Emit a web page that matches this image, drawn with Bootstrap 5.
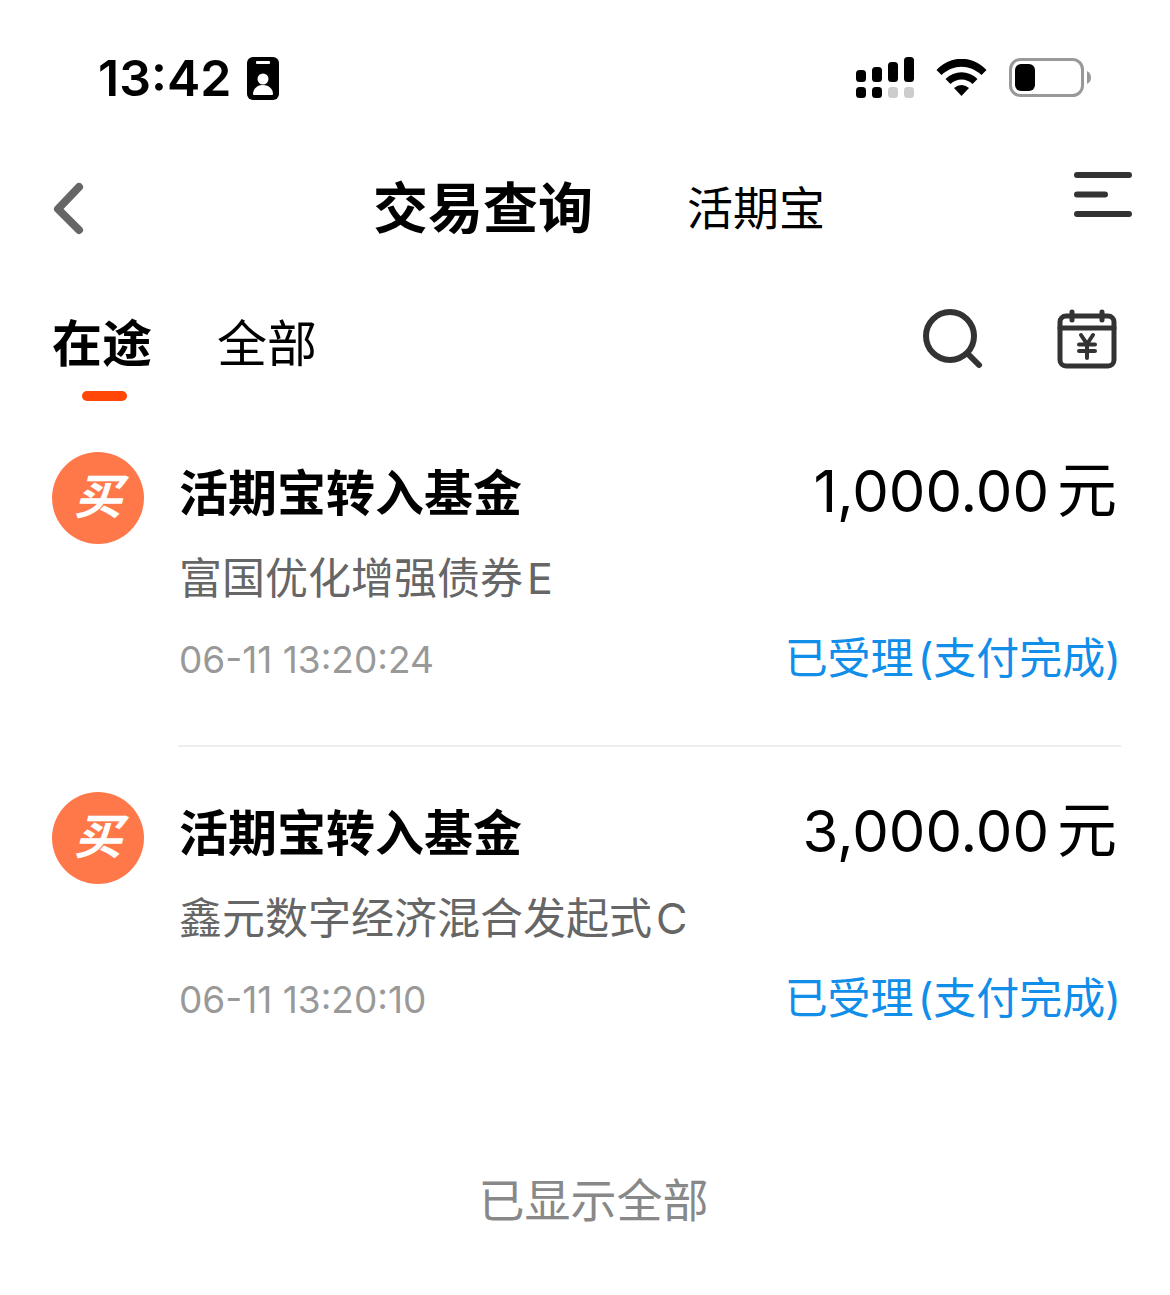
<!DOCTYPE html>
<html lang="zh-CN">
<head>
<meta charset="utf-8">
<meta name="viewport" content="width=device-width, initial-scale=1">
<title>交易查询</title>
<link href="https://cdn.jsdelivr.net/npm/bootstrap@5.3.0/dist/css/bootstrap.min.css" rel="stylesheet">
<style>
  body { font-family: Inter, "Noto Sans CJK SC", sans-serif; color: #000; background: #fff; }
  svg { display: block; flex: none; }
  a, button { color: inherit; text-decoration: none; }
  .status-bar { height: 156px; padding: 0 79px 0 98px; }
  .status-icons { gap: 22px; }
  .clock { font-size: 50px; line-height: 60px; font-weight: 600; }
  .top-bar { height: 104px; padding: 0 38px 0 52px; }
  .back-btn { width: 72px; }
  .menu-btn { padding-bottom: 26px; }
  .page-title { font-size: 55px; line-height: 80px; font-weight: 700; }
  .page-alt { font-size: 46px; line-height: 80px; }
  .title-gap { gap: 94px; }
  .tab-bar { padding: 44px 52px 0; }
  .tab-gap { gap: 65px; }
  .tab-link { font-size: 50px; line-height: 80px; padding-bottom: 17px; }
  .tab-link.active { font-weight: 700; }
  .tab-link.active::after { content: ""; position: absolute; left: 50%; bottom: 0; width: 45px; height: 10px; margin-left: -20px; border-radius: 5px; background: #ff4708; }
  .tool-gap { gap: 72px; padding-top: 4px; }
  .deal-list { padding: 6px 49px 0 52px; }
  .deal { gap: 34px; }
  .deal-badge { width: 92px; height: 92px; margin-top: 45px; border-radius: 50%; background: #ff784a; color: #fff; font-size: 48px; line-height: 90px; font-weight: 700; font-style: italic; text-align: center; flex: none; }
  .deal-body { height: 340px; padding: 37px 4px 0 1px; border-bottom: 2px solid #eee; }
  .deal:last-child .deal-body { border: 0; }
  .deal-name { font-size: 49px; line-height: 100px; font-weight: 700; }
  .deal-sum { font-size: 60px; line-height: 92px; }
  .deal-num { font-size: 58px; }
  .unit-gap { margin-left: 8px; }
  .cjk-gap { margin-left: 4px; }
  .deal-fund { font-size: 43px; line-height: 68px; color: #666; }
  .deal-time { font-size: 37px; line-height: 96px; color: #999; }
  .deal-state { font-size: 43px; line-height: 92px; color: #108ee9; margin-right: -4px; }
  .list-end { font-size: 46px; line-height: 80px; color: #888; padding: 73px 0 56px 17px; }
</style>
</head>
<body>
<div class="status-bar d-flex align-items-center justify-content-between">
  <div class="d-flex align-items-center gap-3">
    <span class="clock">13:42</span>
    <svg width="32" height="44" viewBox="0 0 32 44"><rect width="32" height="43" y="1" rx="6"/><rect x="9" y="5" width="14" height="3" rx="1" fill="#fff"/><circle cx="16" cy="23" r="5.500" fill="#fff"/><path d="M6 38c0-5 4-9 10-9s10 4 10 9q0 1-1 1H7q-1 0-1-1z" fill="#fff"/></svg>
  </div>
  <div class="status-icons d-flex align-items-center">
    <svg width="58" height="42" viewBox="0 0 58 42"><rect y="13" width="10" height="12" rx="3.500"/><rect x="16" y="10" width="10" height="15" rx="3.500"/><rect x="32" y="5" width="10" height="20" rx="3.500"/><rect x="48" y="0" width="10" height="25" rx="3.500"/><rect y="30" width="10" height="11" rx="3.500"/><rect x="16" y="30" width="10" height="11" rx="3.500"/><g fill="#ccc"><rect x="32" y="30" width="10" height="11" rx="3.500"/><rect x="48" y="30" width="10" height="11" rx="3.500"/></g></svg>
    <svg width="51" height="38" viewBox="0 0 50 38"><path d="M0 11C14-4 36-4 50 11l-5 5C33 5 17 5 5 16z"/><path d="M9 20c9-9 23-9 32 0l-5 5c-6-6-16-6-22 0z"/><path d="M17.500 29q7.500-6 15 0L25 37z"/></svg>
    <svg width="82" height="42" viewBox="0 0 82 42"><rect x="1.500" y="2.500" width="72" height="36" rx="10" fill="none" stroke="#999" stroke-width="3"/><rect x="6" y="7" width="20" height="27" rx="6"/><path d="M78 14q4 2 4 6.500t-4 6.500z" fill="#999"/></svg>
  </div>
</div>

<header class="top-bar d-flex align-items-center justify-content-between">
  <button type="button" class="back-btn btn p-0 border-0" aria-label="返回"><svg width="33" height="54" viewBox="0 0 33 54"><path d="M27 6 6 28l21 21" fill="none" stroke="#666" stroke-width="8" stroke-linecap="round" stroke-linejoin="round"/></svg></button>
  <nav class="title-gap d-flex align-items-center">
    <h1 class="page-title m-0">交易查询</h1>
    <a class="page-alt" href="#">活期宝</a>
  </nav>
  <button type="button" class="menu-btn btn px-0 pt-0 border-0" aria-label="菜单"><svg width="58" height="46" viewBox="0 0 58 46"><path d="M3 3h52M3 22.500h28M3 42h52" fill="none" stroke="#333" stroke-width="6" stroke-linecap="round"/></svg></button>
</header>

<div class="tab-bar d-flex align-items-start justify-content-between">
  <nav class="tab-gap d-flex">
    <a class="tab-link active position-relative" href="#">在途</a>
    <a class="tab-link" href="#">全部</a>
  </nav>
  <div class="tool-gap d-flex">
    <button type="button" class="btn p-0 border-0" aria-label="搜索"><svg width="62" height="62" viewBox="0 0 62 62" fill="none" stroke="#333" stroke-linecap="round"><circle cx="28" cy="28" r="24" stroke-width="6"/><path d="m46 46 11 11" stroke-width="6"/></svg></button>
    <button type="button" class="btn p-0 border-0" aria-label="交易日历"><svg width="62" height="62" viewBox="0 0 62 62" fill="none" stroke="#333" stroke-width="5" stroke-linecap="round" stroke-linejoin="round"><rect x="4" y="8" width="54" height="50" rx="6"/><path d="M4 20h54M16 4v8M46 4v8"/><path d="m25 27 6 9 6-9M23 36.500h16M23 43h16M31 36v14" stroke-width="4"/></svg></button>
  </div>
</div>

<main>
  <div class="deal-list">
    <article class="deal d-flex">
      <div class="deal-badge">买</div>
      <div class="deal-body flex-grow-1">
        <div class="d-flex justify-content-between"><h2 class="deal-name m-0">活期宝转入基金</h2><div class="deal-sum"><span class="deal-num">1,000.00</span><span class="unit-gap">元</span></div></div>
        <div class="deal-fund">富国优化增强债券<span class="cjk-gap">E</span></div>
        <div class="d-flex justify-content-between"><time class="deal-time">06-11 13:20:24</time><div class="deal-state">已受理<span class="cjk-gap">(支付完成)</span></div></div>
      </div>
    </article>
    <article class="deal d-flex">
      <div class="deal-badge">买</div>
      <div class="deal-body flex-grow-1">
        <div class="d-flex justify-content-between"><h2 class="deal-name m-0">活期宝转入基金</h2><div class="deal-sum"><span class="deal-num">3,000.00</span><span class="unit-gap">元</span></div></div>
        <div class="deal-fund">鑫元数字经济混合发起式<span class="cjk-gap">C</span></div>
        <div class="d-flex justify-content-between"><time class="deal-time">06-11 13:20:10</time><div class="deal-state">已受理<span class="cjk-gap">(支付完成)</span></div></div>
      </div>
    </article>
  </div>
  <div class="list-end text-center">已显示全部</div>
</main>
<script src="https://cdn.jsdelivr.net/npm/bootstrap@5.3.0/dist/js/bootstrap.bundle.min.js"></script>
</body>
</html>
